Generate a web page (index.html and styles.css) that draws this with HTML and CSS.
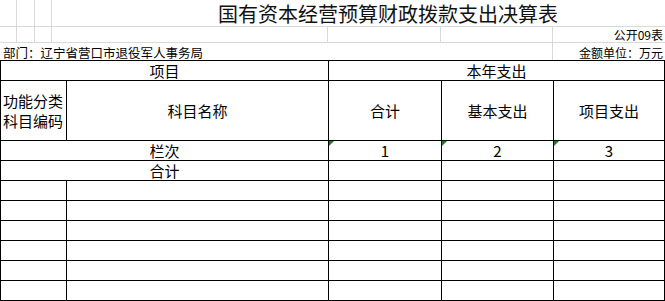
FILE: index.html
```html
<!DOCTYPE html>
<html lang="zh-CN">
<head>
<meta charset="utf-8">
<title>国有资本经营预算财政拨款支出决算表</title>
<link rel="stylesheet" href="styles.css">
</head>
<body>
<div class="sheet">
  <div class="head">
    <div class="g"></div><div class="g"></div><div class="g"></div>
    <div class="title">国有资本经营预算财政拨款支出决算表</div>

    <div class="g"></div><div class="g"></div><div class="g"></div>
    <div class="g wide"></div><div class="g mid"></div><div class="g mid"></div>
    <div class="form-no">公开09表</div>

    <div class="dept">部门：辽宁省营口市退役军人事务局</div>
    <div class="g mid hide"></div>
    <div class="unit">金额单位：万元</div>
  </div>

  <div class="grid">
    <div class="c span2">项目</div>
    <div class="c span3">本年支出</div>

    <div class="c tall code">功能分类<br>科目编码</div>
    <div class="c tall">科目名称</div>
    <div class="c tall">合计</div>
    <div class="c tall">基本支出</div>
    <div class="c tall">项目支出</div>

    <div class="c span2">栏次</div>
    <div class="c flag">1</div>
    <div class="c flag">2</div>
    <div class="c flag">3</div>

    <div class="c span2">合计</div>
    <div class="c"></div><div class="c"></div><div class="c"></div>

    <div class="c"></div><div class="c"></div><div class="c"></div><div class="c"></div><div class="c"></div>
    <div class="c"></div><div class="c"></div><div class="c"></div><div class="c"></div><div class="c"></div>
    <div class="c"></div><div class="c"></div><div class="c"></div><div class="c"></div><div class="c"></div>
    <div class="c"></div><div class="c"></div><div class="c"></div><div class="c"></div><div class="c"></div>
    <div class="c"></div><div class="c"></div><div class="c"></div><div class="c"></div><div class="c"></div>
    <div class="c"></div><div class="c"></div><div class="c"></div><div class="c"></div><div class="c"></div>
  </div>
</div>
</body>
</html>
```

FILE: styles.css
```css
html, body {
  margin: 0;
  padding: 0;
  background: #ffffff;
}

body {
  width: 665px;
  height: 301px;
  overflow: hidden;
  font-family: "Noto Sans CJK SC", "Noto Sans", sans-serif;
  color: #000;
}

.sheet {
  width: 665px;
}

/* header area with light spreadsheet gridlines */
.head {
  display: grid;
  grid-template-columns: 17px 18px 17px 276px 113px 112px 112px;
  grid-template-rows: 27px 16px 17px;
  height: 60px;
}

.g {
  border-right: 1px solid #d9d9d9;
  border-bottom: 1px solid #d9d9d9;
  box-sizing: border-box;
}

.g.hide {
  border-bottom: none;
}

.title {
  grid-column: 4 / 8;
  grid-row: 1;
  border-bottom: 1px solid #d9d9d9;
  box-sizing: border-box;
  font-size: 20px;
  line-height: 28px;
  padding-left: 166px;
  white-space: nowrap;
  color: #111;
}

.form-no {
  grid-column: 7;
  grid-row: 2;
  font-size: 12px;
  line-height: 15px;
  text-align: right;
  padding-right: 2px;
  white-space: nowrap;
  border-bottom: 1px solid #d9d9d9;
  box-sizing: border-box;
}

.dept {
  grid-column: 1 / 6;
  grid-row: 3;
  font-size: 12.5px;
  line-height: 15px;
  padding-top: 2px;
  padding-left: 3px;
  white-space: nowrap;
}

.unit {
  grid-column: 7;
  grid-row: 3;
  font-size: 12px;
  line-height: 15px;
  padding-top: 2px;
  text-align: right;
  padding-right: 2px;
  white-space: nowrap;
}

/* main table */
.grid {
  display: grid;
  grid-template-columns: 66px 262px 113px 112px 111px;
  grid-template-rows: 20px 60px repeat(8, 20px);
  border-top: 1px solid #000;
  border-left: 1px solid #000;
  width: 665px;
  box-sizing: border-box;
}

.c {
  border-right: 1px solid #000;
  border-bottom: 1px solid #000;
  box-sizing: border-box;
  font-size: 15px;
  line-height: 19px;
  text-align: center;
  white-space: nowrap;
  position: relative;
}

.span2 {
  grid-column: span 2;
}

.span3 {
  grid-column: span 3;
}

.tall {
  display: flex;
  align-items: center;
  justify-content: center;
}

.code {
  text-align: left;
  justify-content: flex-start;
  padding-left: 2px;
  line-height: 20px;
}

.flag::before {
  content: "";
  position: absolute;
  left: 0;
  top: 0;
  border-top: 5px solid #1e7b22;
  border-right: 5px solid transparent;
}
```
